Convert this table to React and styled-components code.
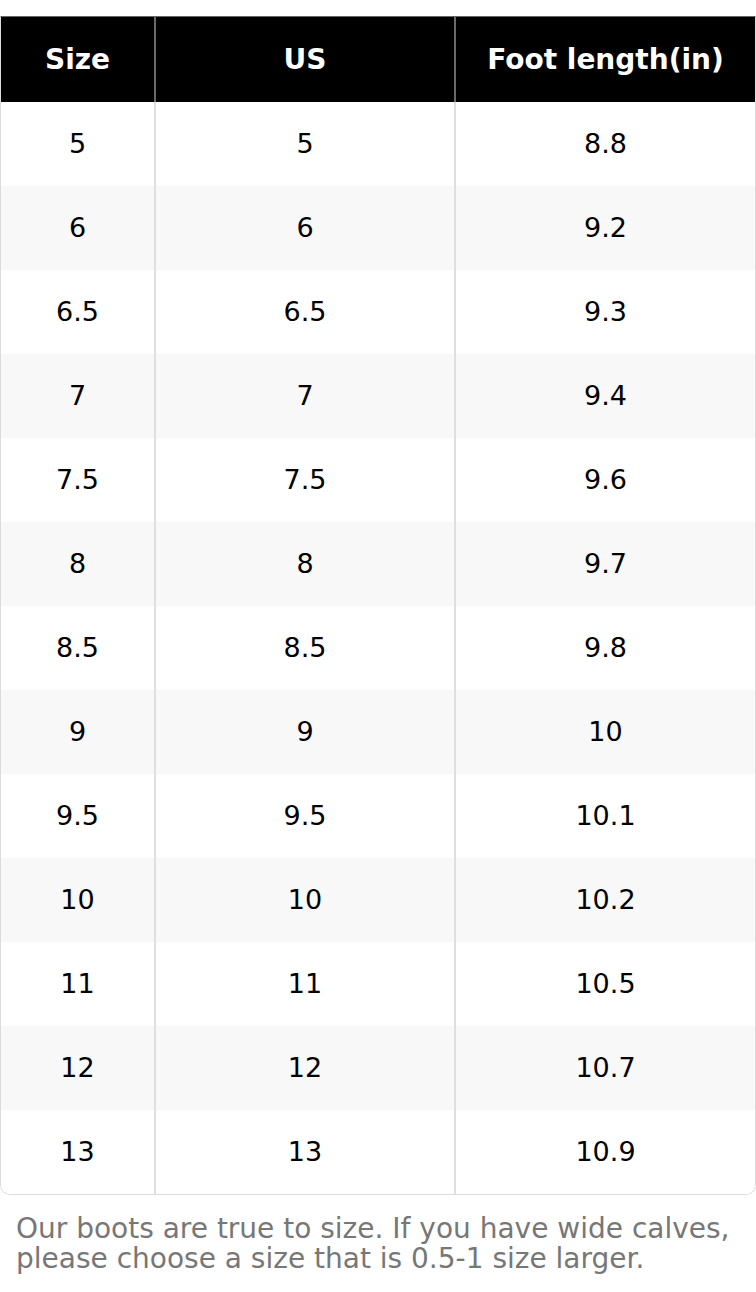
import { createGlobalStyle, styled } from "styled-components";

const GlobalStyle = createGlobalStyle`
  body {
    margin: 0;
    background: #fff;
    font-family: "DejaVu Sans", sans-serif;
  }
`;

const ROWS = [
  ["5", "5", "8.8"],
  ["6", "6", "9.2"],
  ["6.5", "6.5", "9.3"],
  ["7", "7", "9.4"],
  ["7.5", "7.5", "9.6"],
  ["8", "8", "9.7"],
  ["8.5", "8.5", "9.8"],
  ["9", "9", "10"],
  ["9.5", "9.5", "10.1"],
  ["10", "10", "10.2"],
  ["11", "11", "10.5"],
  ["12", "12", "10.7"],
  ["13", "13", "10.9"],
];

export default function App() {
  return (
    <Page>
      <GlobalStyle />
      <TableWrap>
        <Table>
          <colgroup>
            <col style={{ width: 154 }} />
            <col style={{ width: 300 }} />
            <col />
          </colgroup>
          <thead>
            <tr>
              <HeadCell>Size</HeadCell>
              <HeadCell>US</HeadCell>
              <HeadCell>Foot length(in)</HeadCell>
            </tr>
          </thead>
          <tbody>
            {ROWS.map((r, i) => (
              <Row key={i} $striped={i % 2 === 1}>
                {r.map((c, j) => (
                  <Cell key={j}>{c}</Cell>
                ))}
              </Row>
            ))}
          </tbody>
        </Table>
      </TableWrap>
      <Note>
        Our boots are true to size. If you have wide calves, please choose a
        size that is 0.5-1 size larger.
      </Note>
    </Page>
  );
}

const Page = styled.div`
  width: 756px;
  padding-top: 16px;
`;

const TableWrap = styled.div`
  border: 1px solid #dcdcdc;
  border-top: 1px solid #666;
  border-radius: 0 0 10px 10px;
  overflow: hidden;
`;

const Table = styled.table`
  width: 100%;
  border-collapse: collapse;
  table-layout: fixed;
`;

const HeadCell = styled.th`
  height: 85px;
  padding: 0;
  background: #000;
  color: #fff;
  font-size: 28px;
  font-weight: 700;
  text-align: center;
  border-right: 2px solid #6a6a6a;
  &:last-child {
    border-right: none;
  }
`;

const Row = styled.tr`
  background: ${(p) => (p.$striped ? "#f8f8f8" : "#fff")};
`;

const Cell = styled.td`
  height: 84px;
  padding: 0;
  color: #000;
  font-size: 27px;
  line-height: 30px;
  text-align: center;
  border-right: 2px solid #dedede;
  &:last-child {
    border-right: none;
  }
`;

const Note = styled.p`
  margin: 0;
  padding: 19px 16px 0;
  color: #777;
  font-size: 28px;
  line-height: 30px;
`;
